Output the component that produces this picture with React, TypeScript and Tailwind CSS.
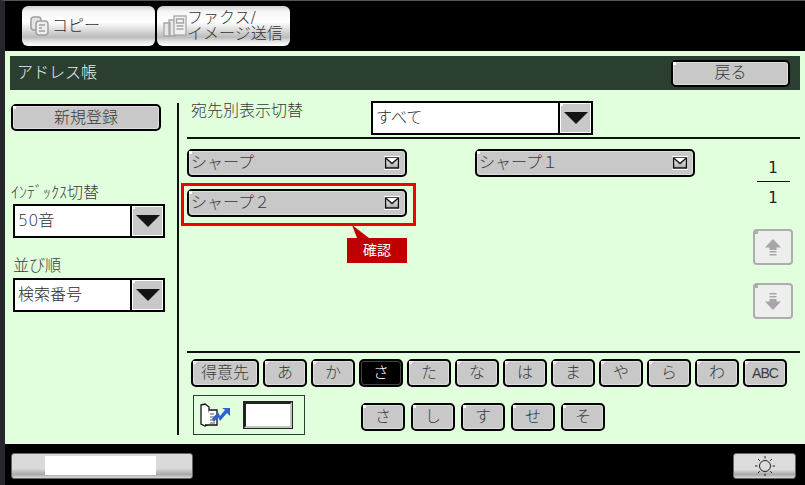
import type { ReactNode } from 'react';

const KANA_ROW = ['あ', 'か', 'さ', 'た', 'な', 'は', 'ま', 'や', 'ら', 'わ'];
const SUB_ROW = ['さ', 'し', 'す', 'せ', 'そ'];

function Btn({
  children,
  className = '',
  dark = false,
}: {
  children?: ReactNode;
  className?: string;
  dark?: boolean;
}) {
  return (
    <div
      className={`relative flex items-center justify-center rounded-[5px] border-[2px] border-black ${
        dark
          ? 'bg-black text-white shadow-[inset_0_0_0_1px_#444444]'
          : 'bg-[#c8c8c8] text-[#3a3a3a] shadow-[inset_0_0_0_1px_#dddddd]'
      } ${className}`}
    >
      {!dark && <span className="absolute left-0 top-0 h-[3px] w-[3px] bg-white" />}
      {children}
    </div>
  );
}

function Envelope() {
  return (
    <svg width="16" height="14" viewBox="0 0 16 14" className="shrink-0">
      <defs>
        <linearGradient id="env" x1="0" y1="0" x2="0" y2="1">
          <stop offset="0" stopColor="#ffffff" />
          <stop offset="1" stopColor="#a8a8a8" />
        </linearGradient>
      </defs>
      <rect x="0" y="0" width="16" height="14" fill="#ffffff" />
      <path d="M1.500 2h13v10h-13z" fill="url(#env)" stroke="#111111" strokeWidth="1.500" />
      <path d="M1.500 2 8 7.500 14.500 2" fill="#ffffff" stroke="#111111" strokeWidth="1.500" />
    </svg>
  );
}

function Entry({ name }: { name: string }) {
  return (
    <Btn className="h-[28px] w-[220px] !justify-between pl-[2px] pr-[5px] text-[16px]">
      <span>{name}</span>
      <Envelope />
    </Btn>
  );
}

function Select({ value, className = '' }: { value: string; className?: string }) {
  return (
    <div className={`flex h-[34px] border-[2px] border-black bg-white ${className}`}>
      <div className="flex flex-1 items-center pl-[3px] text-[16px] text-[#2e2e2e]">{value}</div>
      <div className="relative flex w-[33px] items-center justify-center border-l-[2px] border-black bg-[#c8c8c8] shadow-[inset_0_0_0_1px_#ffffff]">
        <span className="absolute left-0 top-0 h-[3px] w-[3px] bg-white" />
        <svg width="26" height="14" viewBox="0 0 26 14">
          <path d="M1 1h24L13 13z" fill="#141414" />
        </svg>
      </div>
    </div>
  );
}

function PageArrow({ up }: { up: boolean }) {
  return (
    <div className="relative flex h-[36px] w-[40px] items-center justify-center rounded-[4px] border-[2px] border-[#adadad] bg-[#eeeeee]">
      <span className="absolute left-0 top-0 h-[3px] w-[3px] bg-[#adadad]" />
      <svg width="16" height="17" viewBox="0 0 16 17" fill="#a6a6a6">
        {up ? (
          <path d="M8 0 16 8.500H11.500V11H4.500V8.500H0zM4.500 12H11.500V13.500H4.500zM4.500 15H11.500V16.500H4.500z" />
        ) : (
          <path d="M4.500 0H11.500V1.500H4.500zM4.500 3H11.500V4.500H4.500zM4.500 6H11.500V8.500H16L8 17 0 8.500H4.500z" />
        )}
      </svg>
    </div>
  );
}

export default function App() {
  return (
    <div className="flex h-[485px] w-[805px] flex-col overflow-hidden border-l-[5px] border-t-[1px] border-l-[#26262c] border-t-[#555555] bg-black font-['DejaVu_Sans','Noto_Sans_CJK_JP',sans-serif] font-light text-[#3a3a3a]">
      {/* top tabs */}
      <div className="flex h-[50px] gap-[2px] pl-[17px] pt-[5px]">
        <div className="flex h-[40px] w-[133px] items-center gap-[3px] rounded-[6px] bg-[linear-gradient(#cfcfcf,#f6f6f6_14%,#ffffff_40%,#bcbcbc_78%,#e2e2e2_88%,#ffffff)] pl-[8px] text-[16px] text-[#333333]">
          <svg width="19" height="20" viewBox="0 0 19 20" fill="none" stroke="#a0a0a0" strokeWidth="1.500">
            <rect x="1" y="1" width="10" height="13" rx="3" fill="#e4e4e4" />
            <rect x="6" y="5" width="12" height="14" rx="3" fill="#eeeeee" />
            <path d="M9 9h6M9 12h3M9 15h6" />
          </svg>
          <span>コピー</span>
        </div>
        <div className="flex h-[40px] w-[133px] items-center rounded-[6px] bg-[linear-gradient(#cfcfcf,#f6f6f6_14%,#ffffff_40%,#bcbcbc_78%,#e2e2e2_88%,#ffffff)] pl-[6px] text-[16px] leading-[16px] text-[#333333]">
          <svg width="24" height="24" viewBox="0 0 24 24" fill="none" stroke="#a6a6a6" strokeWidth="1.300" className="shrink-0">
            <path d="M1 9h6v13H1zM6 6h6v16H6z" fill="#e8e8e8" />
            <rect x="11" y="2" width="12" height="19" fill="#f2f2f2" />
            <path d="M13.500 5h7v4h-7zM13.500 12h7M13.500 15h7" />
          </svg>
          <div className="mt-[-1px]">
            <div>ファクス/</div>
            <div>イメージ送信</div>
          </div>
        </div>
      </div>

      {/* main panel */}
      <div className="flex flex-1 flex-col bg-[#e2ffdd] px-[5px] pt-[5px]">
        <div className="flex h-[34px] w-[790px] items-center justify-between bg-[#2a3f30] pl-[7px] pr-[10px] text-[16px] text-[#e8f0e8]">
          <span>アドレス帳</span>
          <Btn className="h-[27px] w-[119px] text-[16px]">戻る</Btn>
        </div>

        <div className="flex h-[353px] w-[790px] pb-[8px] pt-[11px]">
          {/* left column */}
          <div className="flex w-[167px] flex-col">
            <Btn className="ml-[1px] mt-[3px] h-[27px] w-[150px] text-[16px]">新規登録</Btn>
            <div className="ml-[1px] mt-[50px] h-[23px] text-[16px] leading-[23px]">ｲﾝﾃﾞｯｸｽ切替</div>
            <Select value="50音" className="ml-[3px] w-[152px]" />
            <div className="ml-[3px] mt-[16px] h-[24px] text-[16px] leading-[24px]">並び順</div>
            <Select value="検索番号" className="ml-[3px] w-[152px]" />
          </div>

          <div className="mt-[2px] w-[2px] bg-[#111111]" />

          {/* right column */}
          <div className="flex w-[621px] flex-col">
            <div className="flex h-[34px]">
              <div className="ml-[12px] mt-[-2px] w-[180px] text-[16px]">宛先別表示切替</div>
              <Select value="すべて" className="w-[222px]" />
            </div>
            <div className="ml-[8px] mt-[2px] h-[2px] bg-[#111111]" />

            <div className="flex h-[212px]">
              <div className="ml-[8px] mt-[10px] grid h-fit grid-cols-[220px_220px] gap-x-[68px] gap-y-[12px]">
                <Entry name="シャープ" />
                <Entry name="シャープ１" />
                <div className="relative">
                  <Entry name="シャープ２" />
                  <div className="absolute left-[-6px] top-[-6px] h-[43px] w-[235px] border-[3px] border-[#f00000]" />
                  <svg width="30" height="14" viewBox="0 0 30 14" className="absolute left-[160px] top-[36px]">
                    <path d="M5 0 10 13H22z" fill="#c00000" />
                  </svg>
                  <div className="absolute left-[160px] top-[49px] flex h-[25px] w-[60px] items-center justify-center bg-[#c00000] text-[14px] font-normal text-white">
                    確認
                  </div>
                </div>
              </div>

              <div className="ml-[58px] flex w-[40px] flex-col">
                <div className="mt-[19px] h-[20px] text-center text-[15px] font-normal leading-[20px] text-[#222222]">1</div>
                <div className="ml-[4px] mt-[3px] h-[1px] w-[33px] bg-[#111111]" />
                <div className="mt-[6px] h-[20px] text-center text-[15px] font-normal leading-[20px] text-[#222222]">1</div>
                <div className="mt-[21px]">
                  <PageArrow up />
                </div>
                <div className="mt-[18px]">
                  <PageArrow up={false} />
                </div>
              </div>
            </div>

            <div className="ml-[8px] h-[2px] bg-[#111111]" />

            <div className="ml-[12px] mt-[6px] flex gap-[4px]">
              <Btn className="h-[28px] w-[68px] text-[16px]">得意先</Btn>
              {KANA_ROW.map((k) => (
                <Btn key={k} dark={k === 'さ'} className="h-[28px] w-[44px] text-[16px]">
                  {k}
                </Btn>
              ))}
              <Btn className="h-[28px] w-[44px] font-['Liberation_Sans',sans-serif] text-[14px] font-normal tracking-[-1px]">ABC</Btn>
            </div>

            <div className="ml-[14px] mt-[8px] flex">
              <div className="flex h-[40px] w-[112px] items-center border-[1px] border-[#2a3f30] pl-[6px]">
                <svg width="30" height="24" viewBox="0 0 30 24" className="shrink-0">
                  <path d="M1 2 5 1 9 4V21L5 23 1 21z" fill="#ffffff" stroke="#111111" strokeWidth="1.300" />
                  <path d="M9 7H17V22H5" fill="#ffffff" stroke="#111111" strokeWidth="1.300" />
                  <path d="M10 11h4M10 14h5M10 17h5M10 20h5" stroke="#555555" />
                  <path d="M12 16 18 9 20 13 25 7 22 5H30V13L27 10 20 18 18 14 14 19z" fill="#2e62d0" />
                </svg>
                <div className="ml-[14px] h-[26px] w-[48px] border-[2px] border-b-[#c4c4c4] border-l-[#222222] border-r-[#c4c4c4] border-t-[#222222] bg-white outline outline-1 outline-[#222222]" />
              </div>
              <div className="ml-[56px] mt-[8px] flex h-[28px] gap-[6px]">
                {SUB_ROW.map((k) => (
                  <Btn key={k} className="h-[28px] w-[44px] text-[16px]">
                    {k}
                  </Btn>
                ))}
              </div>
            </div>
          </div>
        </div>
      </div>

      {/* bottom bar */}
      <div className="flex h-[41px] items-start justify-between pl-[6px] pr-[9px] pt-[9px]">
        <div className="flex h-[26px] w-[182px] items-start justify-center rounded-[3px] border-[1px] border-[#666666] bg-[linear-gradient(#dadada,#dadada_60%,#a8a8a8_85%,#d8d8d8)] pt-[2px]">
          <div className="ml-[-3px] h-[19px] w-[111px] bg-white" />
        </div>
        <div className="flex h-[26px] w-[63px] items-center justify-center rounded-[3px] border-[1px] border-[#666666] bg-[linear-gradient(#dcdcdc,#dcdcdc_65%,#a8a8a8_85%,#d8d8d8)]">
          <svg width="20" height="20" viewBox="0 0 20 20" fill="none" stroke="#222222" strokeWidth="1">
            <circle cx="10" cy="10" r="5.500" />
            <path d="M10 0v2.500M10 17.500V20M0 10h2.500M17.500 10H20M3 3l1.800 1.800M15.200 15.200 17 17M3 17l1.800-1.800M15.200 4.800 17 3" />
          </svg>
        </div>
      </div>
    </div>
  );
}
